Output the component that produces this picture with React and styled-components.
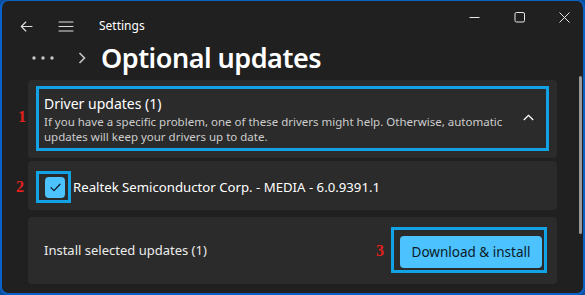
import React from 'react'
import styled, { createGlobalStyle } from 'styled-components'

const GlobalStyle = createGlobalStyle`
  html, body {
    margin: 0;
    padding: 0;
    background: #0b4f9e;
  }
  * {
    box-sizing: border-box;
  }
`

const Window = styled.div`
  position: relative;
  width: 585px;
  height: 295px;
  display: flex;
  flex-direction: column;
  background: #202020;
  border: solid #0a62c9;
  border-width: 1px 2px 2px 2px;
  border-radius: 8px;
  overflow: hidden;
  font-family: "Noto Sans", "Segoe UI", sans-serif;
  color: #ffffff;
`

const TitleBar = styled.div`
  display: flex;
  align-items: flex-start;
  height: 40px;
`

const NavGroup = styled.div`
  display: flex;
  align-items: center;
  height: 20px;
  margin-top: 15px;
  padding-left: 17px;
  flex: 1;
`

const IconButton = styled.span`
  display: flex;
  align-items: center;
  justify-content: center;
  width: ${p => p.w || 16}px;
  margin-right: ${p => p.gap || 0}px;
  color: #e0e0e0;
`

const AppName = styled.span`
  font-size: 12px;
  line-height: 16px;
  color: #ffffff;
`

const Controls = styled.div`
  display: flex;
  align-items: center;
  height: 20px;
  margin-top: 6px;
  padding-right: 13px;
  gap: 34px;
`

const HeaderRow = styled.div`
  display: flex;
  align-items: center;
  height: 34px;
  padding-left: 30px;
`

const Crumb = styled.span`
  display: flex;
  align-items: center;
  width: ${p => p.w}px;
  color: #c8c8c8;
`

const Title = styled.h1`
  margin: 0;
  font-size: 27px;
  font-weight: 600;
  line-height: 34px;
  color: #ffffff;
  letter-spacing: -0.5px;
`

const Content = styled.div`
  display: flex;
  flex-direction: column;
  padding: 5px 26px 0 26px;
`

const Card = styled.div`
  position: relative;
  display: flex;
  align-items: center;
  background: #2b2b2b;
  border-radius: 4px;
  height: ${p => p.h}px;
  margin-bottom: ${p => p.mb || 0}px;
  padding: ${p => p.pad};
`

const Highlight = styled.div`
  display: flex;
  align-items: center;
  border: 3px solid #12a2e6;
  padding: ${p => p.pad};
  flex: ${p => (p.grow ? 1 : 'none')};
  align-self: stretch;
`

const HeaderText = styled.div`
  flex: 1;
  display: flex;
  flex-direction: column;
  padding-top: 1px;
`

const CardTitle = styled.div`
  font-size: 14px;
  line-height: 20px;
  color: #ffffff;
`

const Desc = styled.div`
  font-size: 11.5px;
  line-height: 15px;
  color: #cdcdcd;
`

const Chevron = styled.span`
  display: flex;
  width: 20px;
  justify-content: center;
  margin-right: 2px;
  margin-bottom: 2px;
`

const Marker = styled.span`
  position: absolute;
  left: ${p => p.left}px;
  top: ${p => p.top}px;
  font-family: "Liberation Serif", serif;
  font-weight: 700;
  font-size: 16px;
  line-height: 16px;
  color: #e3201c;
`

const InlineMarker = styled.span`
  font-family: "Liberation Serif", serif;
  font-weight: 700;
  font-size: 16px;
  line-height: 16px;
  color: #e3201c;
  margin-right: 7px;
  margin-top: 2px;
`

const CheckBox = styled.span`
  display: flex;
  align-items: center;
  justify-content: center;
  width: 20px;
  height: 21px;
  border-radius: 4px;
  background: #4cc2ff;
`

const ItemText = styled.span`
  margin-left: 2px;
  font-size: 13.2px;
  color: #ffffff;
`

const InstallText = styled.span`
  flex: 1;
  font-size: 13px;
  color: #ececec;
  padding-left: 16px;
`

const PrimaryButton = styled.button`
  width: 142px;
  height: 32px;
  border: none;
  border-radius: 4px;
  background: #4cc2ff;
  color: #0b1a26;
  font-family: "Noto Sans", "Segoe UI", sans-serif;
  font-size: 13.5px;
  padding: 0;
`

const ScrollBar = styled.div`
  position: absolute;
  left: 577px;
  top: 75px;
  width: 3px;
  height: 158px;
  border-radius: 2px;
  background: #9b9b9b;
`

const Stroke = { stroke: 'currentColor', strokeWidth: 1.1, fill: 'none', strokeLinecap: 'round', strokeLinejoin: 'round' }

export default function App() {
  return (
    <>
      <GlobalStyle />
      <Window>
        <TitleBar>
          <NavGroup>
            <IconButton w={14} gap={25}>
              <svg width="13" height="11" viewBox="0 0 13 11">
                <path d="M12 5.5H1.5M5.8 1L1.3 5.5 5.8 10" {...Stroke} />
              </svg>
            </IconButton>
            <IconButton w={16} gap={25}>
              <svg width="16" height="11" viewBox="0 0 16 11">
                <path d="M1 1h14M1 5.5h14M1 10h14" {...Stroke} />
              </svg>
            </IconButton>
            <AppName>Settings</AppName>
          </NavGroup>
          <Controls>
            <svg width="11" height="11" viewBox="0 0 11 11">
              <path d="M0.5 5.5h10" stroke="#e8e8e8" strokeWidth="1" />
            </svg>
            <svg width="11" height="11" viewBox="0 0 11 11">
              <rect x="1" y="0.5" width="9.5" height="9.5" rx="1.5" stroke="#e8e8e8" strokeWidth="1" fill="none" />
            </svg>
            <svg width="11" height="11" viewBox="0 0 11 11">
              <path d="M0.5 0.5l10 10M10.5 0.5l-10 10" stroke="#e8e8e8" strokeWidth="1" />
            </svg>
          </Controls>
        </TitleBar>

        <HeaderRow>
          <Crumb w={46}>
            <svg width="22" height="4" viewBox="0 0 22 4">
              <circle cx="2" cy="2" r="1.7" fill="#c8c8c8" />
              <circle cx="11" cy="2" r="1.7" fill="#c8c8c8" />
              <circle cx="20" cy="2" r="1.7" fill="#c8c8c8" />
            </svg>
          </Crumb>
          <Crumb w={23}>
            <svg width="8" height="12" viewBox="0 0 8 12">
              <path d="M1.5 1l5 5-5 5" stroke="#c8c8c8" strokeWidth="1.6" fill="none" />
            </svg>
          </Crumb>
          <Title>Optional updates</Title>
        </HeaderRow>

        <Content>
          <Card h={78} mb={3} pad="6px 8px 7px 8px">
            <Marker left={-10} top={29}>1</Marker>
            <Highlight grow pad="0 6px 0 5px">
              <HeaderText>
                <CardTitle>Driver updates (1)</CardTitle>
                <Desc>If you have a specific problem, one of these drivers might help. Otherwise, automatic</Desc>
                <Desc>updates will keep your drivers up to date.</Desc>
              </HeaderText>
              <Chevron>
                <svg width="11" height="7" viewBox="0 0 11 7">
                  <path d="M0.8 6L5.5 1.3 10.2 6" stroke="#ffffff" strokeWidth="1.3" fill="none" />
                </svg>
              </Chevron>
            </Highlight>
          </Card>

          <Card h={49} mb={7} pad="10px 8px 7px 8px">
            <Marker left={-12} top={18}>2</Marker>
            <Highlight pad="0 3px 0 6px">
              <CheckBox>
                <svg width="11" height="9" viewBox="0 0 11 9">
                  <path d="M1 4.6l3 3L10 1.2" stroke="#0b1a26" strokeWidth="1.3" fill="none" strokeLinecap="round" strokeLinejoin="round" />
                </svg>
              </CheckBox>
            </Highlight>
            <ItemText>Realtek Semiconductor Corp. - MEDIA - 6.0.9391.1</ItemText>
          </Card>

          <Card h={67} pad="10px 10px 11px 0">
            <InstallText>Install selected updates (1)</InstallText>
            <InlineMarker>3</InlineMarker>
            <Highlight pad="5px 2px 2px 6px">
              <PrimaryButton>Download &amp; install</PrimaryButton>
            </Highlight>
          </Card>
        </Content>
        <ScrollBar />
      </Window>
    </>
  )
}
